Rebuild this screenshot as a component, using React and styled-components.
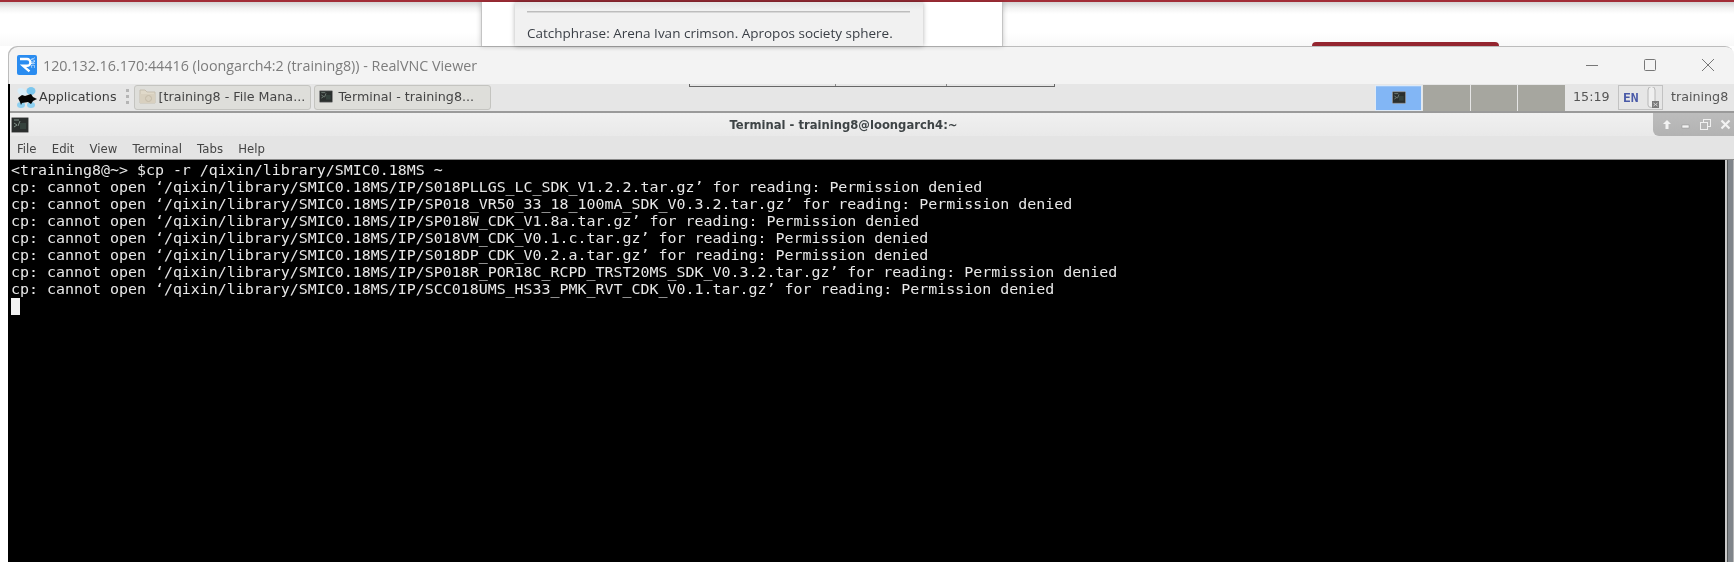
import React from "react";
import styled, { createGlobalStyle } from "styled-components";

const Global = createGlobalStyle`
  html, body { margin: 0; padding: 0; background: #fff; }
  body { width: 1734px; height: 562px; overflow: hidden; font-family: "DejaVu Sans", sans-serif; }
`;

const Page = styled.div`
  width: 1734px;
  height: 562px;
  overflow: hidden;
  background: #fff;
  filter: blur(0.35px);
`;

const Backdrop = styled.div`
  position: relative;
  height: 46px;
  border-top: 2px solid #a32e38;
  box-sizing: border-box;
  background: linear-gradient(#d4d4d4 0, #f2f2f2 6px, #fff 12px, #fff 30px, #f8f8f8 44px);
  display: flex;
`;

const BackPanel = styled.div`
  margin-left: 481px;
  width: 522px;
  padding-left: 33px;
  box-sizing: border-box;
  border-left: 1px solid #c4c4c4;
  border-right: 1px solid #c4c4c4;
  box-shadow: 0 0 5px rgba(0, 0, 0, 0.22);
  background: #fff;
`;

const BackCard = styled.div`
  width: 408px;
  height: 100%;
  box-sizing: border-box;
  padding: 9px 13px 0 12px;
  background: linear-gradient(#e4e4e4 0, #f1f1f1 8px, #f1f1f1 100%);
  box-shadow: 0 0 5px rgba(0, 0, 0, 0.3);
`;

const Rule = styled.div`
  height: 1px;
  background: #bdbdbd;
  border-bottom: 1px solid #d8d8d8;
`;

const Catchphrase = styled.div`
  margin-top: 10px;
  font: 13.5px/20px "Open Sans", sans-serif;
  color: #3a3f46;
  white-space: nowrap;
`;

const RedTab = styled.div`
  position: absolute;
  left: 1312px;
  top: 40px;
  width: 187px;
  height: 4px;
  background: #94252f;
  border-radius: 4px 4px 0 0;
`;

const Win = styled.div`
  margin-left: 8px;
  height: 516px;
  display: flex;
  flex-direction: column;
  background: #f3f3f3;
  border-radius: 9px 9px 0 0;
  box-shadow: inset 1px 1px 0 #bcbcbc;
`;

const WinBar = styled.div`
  position: relative;
  height: 38px;
  flex: none;
  display: flex;
  align-items: center;
  padding-left: 9px;
`;

const WinTitle = styled.div`
  margin-left: 6px;
  font: 14.3px "Open Sans", sans-serif;
  color: #7c7c7c;
  white-space: nowrap;
`;

const WinCtls = styled.div`
  margin-left: auto;
  display: flex;
  align-items: center;
  gap: 46px;
  padding-right: 20px;
`;

const Remote = styled.div`
  flex: 1;
  min-height: 0;
  display: flex;
  flex-direction: column;
  border-left: 2px solid #000;
`;

const Panel = styled.div`
  position: relative;
  height: 26px;
  padding: 0 0 1px 6px;
  flex: none;
  display: flex;
  align-items: center;
  background: #e6e6e6;
  border-bottom: 2px solid #9a9a9a;
  font-size: 12.7px;
  color: #3d3d3d;
`;

const Bracket = styled.div`
  position: absolute;
  left: 679px;
  top: 0;
  width: 366px;
  height: 3px;
  box-sizing: border-box;
  border: 1px solid #666;
  border-top: 0;
  display: flex;
  padding-left: 145px;
  gap: 110px;
`;

const Tick = styled.i`
  width: 1px;
  height: 2px;
  background: #888;
`;

const AppsLabel = styled.span`
  margin: 0 0 2px 1px;
  white-space: nowrap;
`;

const Handle = styled.div`
  margin-left: 9px;
  width: 3px;
  height: 16px;
  background: repeating-linear-gradient(#b5b5b5 0 3px, transparent 3px 6px);
`;

const TaskButton = styled.div`
  width: ${(p) => p.$w}px;
  margin-left: ${(p) => p.$ml}px;
  margin-top: 1px;
  height: 25px;
  box-sizing: border-box;
  display: flex;
  align-items: center;
  gap: ${(p) => p.$gap}px;
  padding: 0 0 3px 4px;
  background: #dededa;
  border: 1px solid #c4c4c0;
  border-radius: 3px;
  white-space: nowrap;
  color: #444;
`;

const Pager = styled.div`
  margin-left: auto;
  display: flex;
  gap: 1px;
  height: 26px;
  margin-top: 1px;
`;

const Workspace = styled.div`
  width: ${(p) => p.$w}px;
  height: 26px;
  box-sizing: border-box;
  display: flex;
  align-items: center;
  justify-content: center;
  background: ${(p) => (p.$on ? "#82b6f5" : "#a6a69f")};
  ${(p) => p.$on && "border: 1px solid #dfeaf6; box-shadow: inset 0 1px 0 #9cc5f6;"}
`;

const Clock = styled.div`
  margin: 0 0 2px 8px;
  width: 37px;
  white-space: nowrap;
  color: #555;
`;

const Tray = styled.div`
  margin-left: 8px;
  width: 45px;
  height: 25px;
  box-sizing: border-box;
  border: 1px solid #c2c2c2;
  display: flex;
  align-items: center;
  padding-left: 4px;
  gap: 8px;
`;

const Lang = styled.span`
  font: bold 13px "DejaVu Sans Mono", monospace;
  color: #4a5aa8;
  width: 16px;
`;

const User = styled.div`
  margin: 0 0 2px 8px;
  width: 63px;
  white-space: nowrap;
  color: #555;
`;

const TermWin = styled.div`
  flex: 1;
  min-height: 0;
  display: flex;
  flex-direction: column;
`;

const TermHead = styled.div`
  position: relative;
  flex: none;
  height: 23px;
  display: flex;
  align-items: center;
  justify-content: center;
  padding-right: 57px;
  background: linear-gradient(#f0f0f0, #e9e9e9);
`;

const TermIconSlot = styled.div`
  position: absolute;
  left: 1px;
  top: 4px;
`;

const TermTitle = styled.div`
  font: bold 11.6px "DejaVu Sans", sans-serif;
  color: #3e4446;
  white-space: nowrap;
`;

const CtlTab = styled.div`
  position: absolute;
  right: 0;
  top: 0;
  width: 81px;
  height: 23px;
  box-sizing: border-box;
  display: flex;
  align-items: center;
  gap: 9px;
  padding-left: 9px;
  background: linear-gradient(#bdbdbd, #b2b2b2);
  border-radius: 0 0 0 6px;
`;

const Menu = styled.div`
  flex: none;
  height: 24px;
  display: flex;
  align-items: center;
  background: #e4e4e4;
  border-bottom: 1px solid #8a8a8a;
  box-sizing: border-box;
  padding: 2px 0 0 7px;
  gap: 15.2px;
  font-size: 11.7px;
  color: #444;
`;

const TermBody = styled.div`
  flex: 1;
  min-height: 0;
  display: flex;
`;

const Screen = styled.pre`
  flex: 1;
  margin: 0;
  padding: 2px 0 0 1px;
  background: #000;
  color: #e8e8e8;
  font: 14.94px/17px "DejaVu Sans Mono", monospace;
  overflow: hidden;
`;

const Cursor = styled.span`
  display: block;
  width: 9px;
  height: 17px;
  background: #f2f2f2;
`;

const Scroll = styled.div`
  flex: none;
  width: 9px;
  box-sizing: border-box;
  background: #80858a;
  border-left: 2px solid #c9c9c9;
  border-right: 1px solid #b5b5b5;
  box-shadow: inset 1px 0 0 #55595a;
`;

const TermIcon = ({ size = 18, h = 16 }) => (
  <svg width={size} height={h} viewBox="0 0 18 16" style={{ flex: "none" }}>
    <rect x="0.5" y="0.5" width="17" height="15" rx="1" fill="#2b2f2e" stroke="#9a9a9a" />
    <path d="M3 3h5M3 6l3 2-3 2M9 4l-2 5" stroke="#7f8f86" strokeWidth="1" fill="none" />
    <rect x="9" y="6" width="6" height="6" fill="#3b4a44" opacity="0.7" />
  </svg>
);

const Mouse = () => (
  <svg width="22" height="24" viewBox="0 0 22 24" style={{ flex: "none" }}>
    <ellipse cx="6" cy="7" rx="5" ry="3.5" fill="#d8eefa" transform="rotate(35 6 7)" />
    <ellipse cx="15" cy="6" rx="4.5" ry="4" fill="#7cc7ee" />
    <ellipse cx="5" cy="20" rx="4" ry="3" fill="#8fd0f0" />
    <ellipse cx="15" cy="20" rx="4" ry="3" fill="#8fd0f0" />
    <path d="M2 13l4-3 3 1 6-2 2 3 4 2-4 2-2 3-3-2-6 1-1 2-1-3z" fill="#050505" />
  </svg>
);

const Folder = () => (
  <svg width="17" height="16" viewBox="0 0 17 16" style={{ flex: "none" }}>
    <path d="M1 2h5l2 2h8v11H1z" fill="#e0d9c9" stroke="#c6bfb0" />
    <path d="M1 6h15v9H1z" fill="#d8d0bf" />
    <circle cx="9.5" cy="10.5" r="3" fill="none" stroke="#c4bba8" />
  </svg>
);

const VncLogo = () => (
  <svg width="20" height="20" viewBox="0 0 20 20" style={{ flex: "none" }}>
    <rect width="20" height="20" rx="2" fill="#2a8cf0" />
    <path d="M3 4h7a3.4 3.4 0 0 1 0 6.8H6l6.5 5.6" fill="none" stroke="#fff" strokeWidth="2.4" />
    <text x="0" y="0" transform="translate(14.4 2.5) rotate(90)" fontSize="5" fill="#fff" fontFamily="Liberation Sans">VNC</text>
  </svg>
);

const Minimize = () => (
  <svg width="12" height="12" viewBox="0 0 12 12"><path d="M0 6.5h12" stroke="#777" /></svg>
);
const Maximize = () => (
  <svg width="12" height="12" viewBox="0 0 12 12"><rect x="0.5" y="0.5" width="11" height="11" rx="1" fill="none" stroke="#777" /></svg>
);
const Close = () => (
  <svg width="12" height="12" viewBox="0 0 12 12"><path d="M0 0l12 12M12 0L0 12" stroke="#777" /></svg>
);

const Battery = () => (
  <svg width="12" height="21" viewBox="0 0 12 21" style={{ flex: "none" }}>
    <path d="M1 18V3a3.5 3.5 0 0 1 7 0v15a3.5 2.5 0 0 1-7 0z" fill="#efefef" stroke="#b8b8b8" />
    <rect x="5" y="14" width="7" height="7" fill="#7a7a7a" />
    <path d="M6.5 16l4 3M10.5 16l-4 3" stroke="#d5d5d5" />
  </svg>
);

const Arrow = () => (
  <svg width="10" height="11" viewBox="0 0 10 11"><path d="M5 1l4 4H6.5v5h-3V5H1z" fill="#f3f3f3" /></svg>
);
const Shade = () => (
  <svg width="10" height="11" viewBox="0 0 10 11"><rect x="1" y="6" width="7" height="3" fill="#f3f3f3" stroke="#8f8f8f" strokeWidth="0.5" /></svg>
);
const Restore = () => (
  <svg width="11" height="11" viewBox="0 0 11 11" fill="none" stroke="#f0f0f0"><rect x="3.5" y="0.5" width="7" height="7" /><rect x="0.5" y="3.5" width="7" height="7" fill="#b6b6b6" /></svg>
);
const Kill = () => (
  <svg width="11" height="11" viewBox="0 0 11 11"><path d="M1.5 1.5l8 8M9.5 1.5l-8 8" stroke="#f3f3f3" strokeWidth="2.2" /></svg>
);

const base = "cp: cannot open ‘/qixin/library/SMIC0.18MS/IP/";
const files = [
  "S018PLLGS_LC_SDK_V1.2.2.tar.gz",
  "SP018_VR50_33_18_100mA_SDK_V0.3.2.tar.gz",
  "SP018W_CDK_V1.8a.tar.gz",
  "S018VM_CDK_V0.1.c.tar.gz",
  "S018DP_CDK_V0.2.a.tar.gz",
  "SP018R_POR18C_RCPD_TRST20MS_SDK_V0.3.2.tar.gz",
  "SCC018UMS_HS33_PMK_RVT_CDK_V0.1.tar.gz",
];
const output =
  "<training8@~> $cp -r /qixin/library/SMIC0.18MS ~\n" +
  files.map((f) => `${base}${f}’ for reading: Permission denied`).join("\n") +
  "\n";

export default function App() {
  return (
    <Page>
      <Global />
      <Backdrop>
        <BackPanel>
          <BackCard>
            <Rule />
            <Catchphrase>Catchphrase: Arena Ivan crimson. Apropos society sphere.</Catchphrase>
          </BackCard>
        </BackPanel>
        <RedTab />
      </Backdrop>
      <Win>
        <WinBar>
          <VncLogo />
          <WinTitle>120.132.16.170:44416 (loongarch4:2 (training8)) - RealVNC Viewer</WinTitle>
          <WinCtls>
            <Minimize />
            <Maximize />
            <Close />
          </WinCtls>
        </WinBar>
        <Remote>
          <Panel>
            <Bracket>
              <Tick />
              <Tick />
            </Bracket>
            <Mouse />
            <AppsLabel>Applications</AppsLabel>
            <Handle />
            <TaskButton $w={177} $ml={5} $gap={3}>
              <Folder />
              [training8 - File Mana...
            </TaskButton>
            <TaskButton $w={177} $ml={3} $gap={6}>
              <TermIcon size={14} h={13} />
              Terminal - training8...
            </TaskButton>
            <Pager>
              <Workspace $w={47} $on>
                <TermIcon size={14} h={13} />
              </Workspace>
              <Workspace $w={47} />
              <Workspace $w={46} />
              <Workspace $w={47} />
            </Pager>
            <Clock>15:19</Clock>
            <Tray>
              <Lang>EN</Lang>
              <Battery />
            </Tray>
            <User>training8</User>
          </Panel>
          <TermWin>
            <TermHead>
              <TermIconSlot>
                <TermIcon />
              </TermIconSlot>
              <TermTitle>Terminal - training8@loongarch4:~</TermTitle>
              <CtlTab>
                <Arrow />
                <Shade />
                <Restore />
                <Kill />
              </CtlTab>
            </TermHead>
            <Menu>
              <span>File</span>
              <span>Edit</span>
              <span>View</span>
              <span>Terminal</span>
              <span>Tabs</span>
              <span>Help</span>
            </Menu>
            <TermBody>
              <Screen>
                {output}
                <Cursor />
              </Screen>
              <Scroll />
            </TermBody>
          </TermWin>
        </Remote>
      </Win>
    </Page>
  );
}
